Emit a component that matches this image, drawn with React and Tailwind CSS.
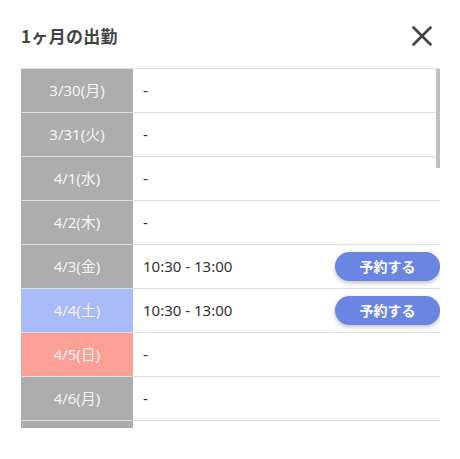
import { X } from "lucide-react"

const rows = [
  { date: "3/30(月)", time: null, tone: "gray" },
  { date: "3/31(火)", time: null, tone: "gray" },
  { date: "4/1(水)", time: null, tone: "gray" },
  { date: "4/2(木)", time: null, tone: "gray" },
  { date: "4/3(金)", time: "10:30 - 13:00", tone: "gray" },
  { date: "4/4(土)", time: "10:30 - 13:00", tone: "blue" },
  { date: "4/5(日)", time: null, tone: "red" },
  { date: "4/6(月)", time: null, tone: "gray" },
  // next row is only peeking in at the bottom of the scroll area
  { date: "", time: null, tone: "gray", empty: true },
]

const toneClass = {
  gray: "bg-[#adadad]",
  blue: "bg-[#a9bbf8]",
  red: "bg-[#fc9f97]",
}

export default function App() {
  return (
    <div
      className="w-[460px] h-[459px] bg-white overflow-hidden"
      style={{ fontFamily: '"Noto Sans", "Noto Sans CJK JP", sans-serif' }}
    >
      <div className="flex items-center justify-between pl-[21px] pr-[21px] pt-[22px] h-[50px]">
        <h1
          className="text-[17px] font-bold text-[#444] tracking-[0.3px]"
          style={{ fontFamily: '"Noto Sans CJK JP", sans-serif' }}
        >
          1ヶ月の出勤
        </h1>
        <X className="w-[34px] h-[34px] text-[#444]" strokeWidth={1.9} />
      </div>

      <div className="relative ml-[21px] mt-[18px] w-[419px] h-[360px] overflow-hidden border-t border-[#e0e0e0]">
        {rows.map((r, i) => (
          <div key={i} className="flex h-[44px] border-b border-[#dedede]">
            <div
              className={`w-[112px] shrink-0 flex items-center justify-center text-[15px] text-[#f4f4f4] ${toneClass[r.tone]}`}
            >
              {r.date}
            </div>
            <div className="flex-1 flex items-center justify-between pl-[10px] text-[15px] text-[#333]">
              <span>{r.empty ? "" : r.time ?? "-"}</span>
              {r.time && (
                <button
                  type="button"
                  className="w-[105px] h-[29px] rounded-full bg-[#6b86e2] text-white text-[14px] font-bold shadow-[0_2px_4px_rgba(0,0,0,0.25)]"
                  style={{ fontFamily: '"Noto Sans CJK JP", sans-serif' }}
                >
                  予約する
                </button>
              )}
            </div>
          </div>
        ))}
        <div className="absolute right-0 top-0 w-[4px] h-[99px] bg-[#c2c2c2]" />
      </div>
    </div>
  )
}
